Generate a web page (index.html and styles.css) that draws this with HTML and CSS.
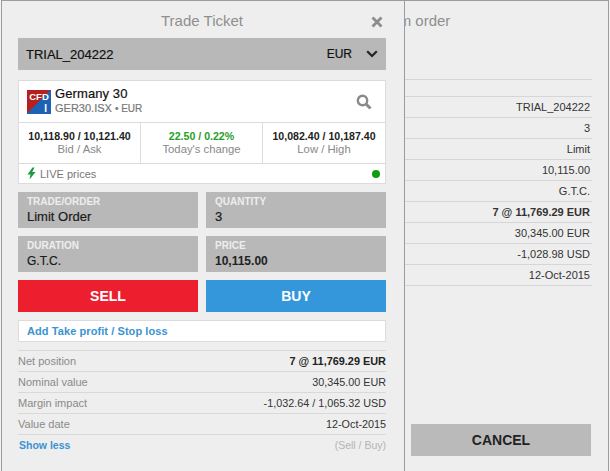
FILE: index.html
```html
<!DOCTYPE html>
<html lang="en">
<head>
<meta charset="utf-8">
<title>Trade Ticket</title>
<link rel="stylesheet" href="styles.css">
</head>
<body>
<div class="desk">
  <section class="panel back">
    <h2 class="title">Confirm order</h2>
    <div class="summary">
      <div class="srow"></div>
      <div class="srow">TRIAL_204222</div>
      <div class="srow">3</div>
      <div class="srow">Limit</div>
      <div class="srow">10,115.00</div>
      <div class="srow">G.T.C.</div>
      <div class="srow strong">7 @ 11,769.29 EUR</div>
      <div class="srow">30,345.00 EUR</div>
      <div class="srow">-1,028.98 USD</div>
      <div class="srow">12-Oct-2015</div>
    </div>
    <div class="cancel">CANCEL</div>
  </section>

  <section class="panel front">
    <header class="head">
      <h2 class="title">Trade Ticket</h2>
      <svg class="close" width="12" height="12" viewBox="0 0 12 12"><path d="M1.5 1.500l9 9M10.500 1.500l-9 9" stroke="#8c8c8c" stroke-width="2.800" fill="none"/></svg>
    </header>
    <div class="account">
      <span>TRIAL_204222</span>
      <span class="account-right">EUR
        <svg width="12" height="8" viewBox="0 0 12 8"><path d="M1.200 1.200L6 6l4.800-4.800" stroke="#222" stroke-width="2.200" fill="none"/></svg>
      </span>
    </div>
    <div class="card">
      <div class="inst">
        <div class="logo"><span class="cfd">CFD</span><span class="ii">I</span></div>
        <div class="inst-text">
          <div class="inst-name">Germany 30</div>
          <div class="inst-code">GER30.ISX <span class="small">• EUR</span></div>
        </div>
        <svg class="search" width="16" height="16" viewBox="0 0 16 16"><circle cx="6.500" cy="6.500" r="4.700" stroke="#8a8a8a" stroke-width="2.400" fill="none"/><path d="M10 10l4.500 4.500" stroke="#8a8a8a" stroke-width="3" fill="none"/></svg>
      </div>
      <div class="prices">
        <div class="pcell"><b>10,118.90 / 10,121.40</b><span>Bid / Ask</span></div>
        <div class="pcell"><b class="up">22.50 / 0.22%</b><span>Today's change</span></div>
        <div class="pcell"><b>10,082.40 / 10,187.40</b><span>Low / High</span></div>
      </div>
      <div class="live">
        <svg width="9" height="13" viewBox="0 0 9 12"><path d="M5.500 0L.5 7h3L2.500 12 8.500 4.500h-3.300L7.500 0z" fill="#1a9a3c"/></svg>
        <span>LIVE prices</span>
        <i class="dot"></i>
      </div>
    </div>
    <div class="fields">
      <div class="field"><label>TRADE/ORDER</label><div>Limit Order</div></div>
      <div class="field"><label>QUANTITY</label><div>3</div></div>
      <div class="field"><label>DURATION</label><div class="compact">G.T.C.</div></div>
      <div class="field"><label>PRICE</label><div class="price">10,115.00</div></div>
      <div class="btn sell">SELL</div>
      <div class="btn buy">BUY</div>
    </div>
    <div class="addtp">Add Take profit / Stop loss</div>
    <div class="details">
      <div class="drow"><span>Net position</span><b>7 @ 11,769.29 EUR</b></div>
      <div class="drow"><span>Nominal value</span><em>30,345.00 EUR</em></div>
      <div class="drow"><span>Margin impact</span><em>-1,032.64 / 1,065.32 USD</em></div>
      <div class="drow"><span>Value date</span><em>12-Oct-2015</em></div>
      <div class="drow last"><strong>Show less</strong><small>(Sell / Buy)</small></div>
    </div>
  </section>
</div>
</body>
</html>
```
FILE: styles.css
```css
* { box-sizing: border-box; }
html, body { margin: 0; padding: 0; }
body { font-family: "Liberation Sans", Arial, sans-serif; background: #f2f2f2; color: #222; }
.desk { position: relative; width: 610px; height: 471px; overflow: hidden; }
.panel { position: absolute; top: 0; height: 472px; background: #eeeeee; border: 1px solid #9c9c9c; border-bottom: 0; }
.title { margin: 0; font-size: 15px; font-weight: 400; color: #8f8f8f; text-align: center; line-height: 18px; }

.back { left: 216px; width: 393px; padding: 11px 16px 0 0; }
.back .title { margin-bottom: 49px; }
.summary { border-bottom: 1px solid #d6d6d6; }
.srow { height: 21px; border-top: 1px solid #d6d6d6; font-size: 11px; line-height: 20px; text-align: right; padding-right: 2px; color: #333; }
.srow:first-child { height: 17px; }
.srow.strong { font-weight: 700; }
.cancel { position: absolute; left: 194px; top: 423px; width: 180px; height: 32px; background: #bababa; font-size: 14px; font-weight: 700; line-height: 32px; text-align: center; color: #222; }

.front { left: 1px; width: 404px; padding: 11px 18px 0 16px; }
.head { position: relative; height: 26px; }
.close { position: absolute; right: 3px; top: 4px; }
.account { display: flex; justify-content: space-between; align-items: center; height: 32px; padding: 0 8px; background: #b8b8b8; font-size: 13px; color: #111; -webkit-text-stroke: 0.2px #111; }
.account-right { display: flex; align-items: center; gap: 14px; font-size: 12px; }
.card { margin-top: 10px; height: 104px; background: #fff; border: 1px solid #dcdcdc; }
.inst { display: flex; align-items: center; height: 41px; padding: 0 13px 0 8px; }
.logo { position: relative; width: 24px; height: 24px; margin-right: 4px; background: linear-gradient(135deg, #b5221e 50%, #1c62b5 50%); display: flex; flex-direction: column; align-items: center; font-weight: 700; color: #fff; line-height: 11px; overflow: hidden; }
.cfd { font-size: 9.500px; line-height: 13px; }
.ii { font-size: 10px; align-self: flex-end; margin-right: 4px; }
.inst-text { flex: 1; padding-bottom: 1px; }
.inst-name { font-size: 13px; color: #111; line-height: 14px; letter-spacing: 0.1px; -webkit-text-stroke: 0.2px #111; }
.inst-code { font-size: 11px; color: #777; line-height: 14px; -webkit-text-stroke: 0.2px #777; }
.small { font-size: 10px; }
.prices { display: grid; grid-template-columns: 121px 122px 1fr; height: 42px; border-top: 1px solid #dcdcdc; border-bottom: 1px solid #dcdcdc; }
.pcell { display: flex; flex-direction: column; align-items: center; padding-top: 7px; border-left: 1px solid #dcdcdc; font-size: 10.600px; line-height: 13px; }
.pcell:first-child { border-left: 0; }
.pcell b { color: #222; }
.pcell b.up { color: #1fa01f; }
.pcell span { color: #888; font-size: 11.300px; }
.live { display: flex; align-items: center; gap: 4px; height: 19px; padding: 0 5px 0 8px; font-size: 11px; color: #777; }
.dot { margin-left: auto; width: 8px; height: 8px; border-radius: 50%; background: #0d9d0d; }
.fields { display: grid; grid-template-columns: 180px 180px; gap: 8px; margin-top: 8px; }
.field { height: 36px; background: #b8b8b8; padding: 4px 9px 0; }
.field label { display: block; font-size: 10px; font-weight: 700; color: #eee; line-height: 12px; }
.field div { font-size: 13px; line-height: 18px; color: #1a1a1a; -webkit-text-stroke: 0.2px #1a1a1a; }
.field .compact { font-size: 12px; }
.field .price { font-size: 12px; font-weight: 700; -webkit-text-stroke: 0; color: #222; }
.btn { height: 32px; font-size: 14px; font-weight: 700; color: #fff; line-height: 32px; text-align: center; }
.sell { background: #ed1f2e; }
.buy { background: #3597db; }
.addtp { margin-top: 8px; height: 22px; padding-left: 8px; background: #fff; border: 1px solid #dcdcdc; font-size: 11px; font-weight: 700; line-height: 20px; letter-spacing: 0.08px; color: #3a93d0; }
.details { margin-top: 8px; border-top: 1px solid #d9d9d9; }
.drow { display: flex; justify-content: space-between; height: 21px; border-bottom: 1px solid #d9d9d9; font-size: 11px; line-height: 20px; color: #333; }
.drow span { color: #8a8a8a; }
.drow b { color: #222; font-size: 10.900px; }
.drow em { font-style: normal; font-size: 10.800px; }
.drow.last { border-bottom: 0; }
.drow strong { color: #3a93d0; padding-left: 1px; font-size: 10.500px; }
.drow small { font-size: 10.500px; color: #b4b4b4; }
```
